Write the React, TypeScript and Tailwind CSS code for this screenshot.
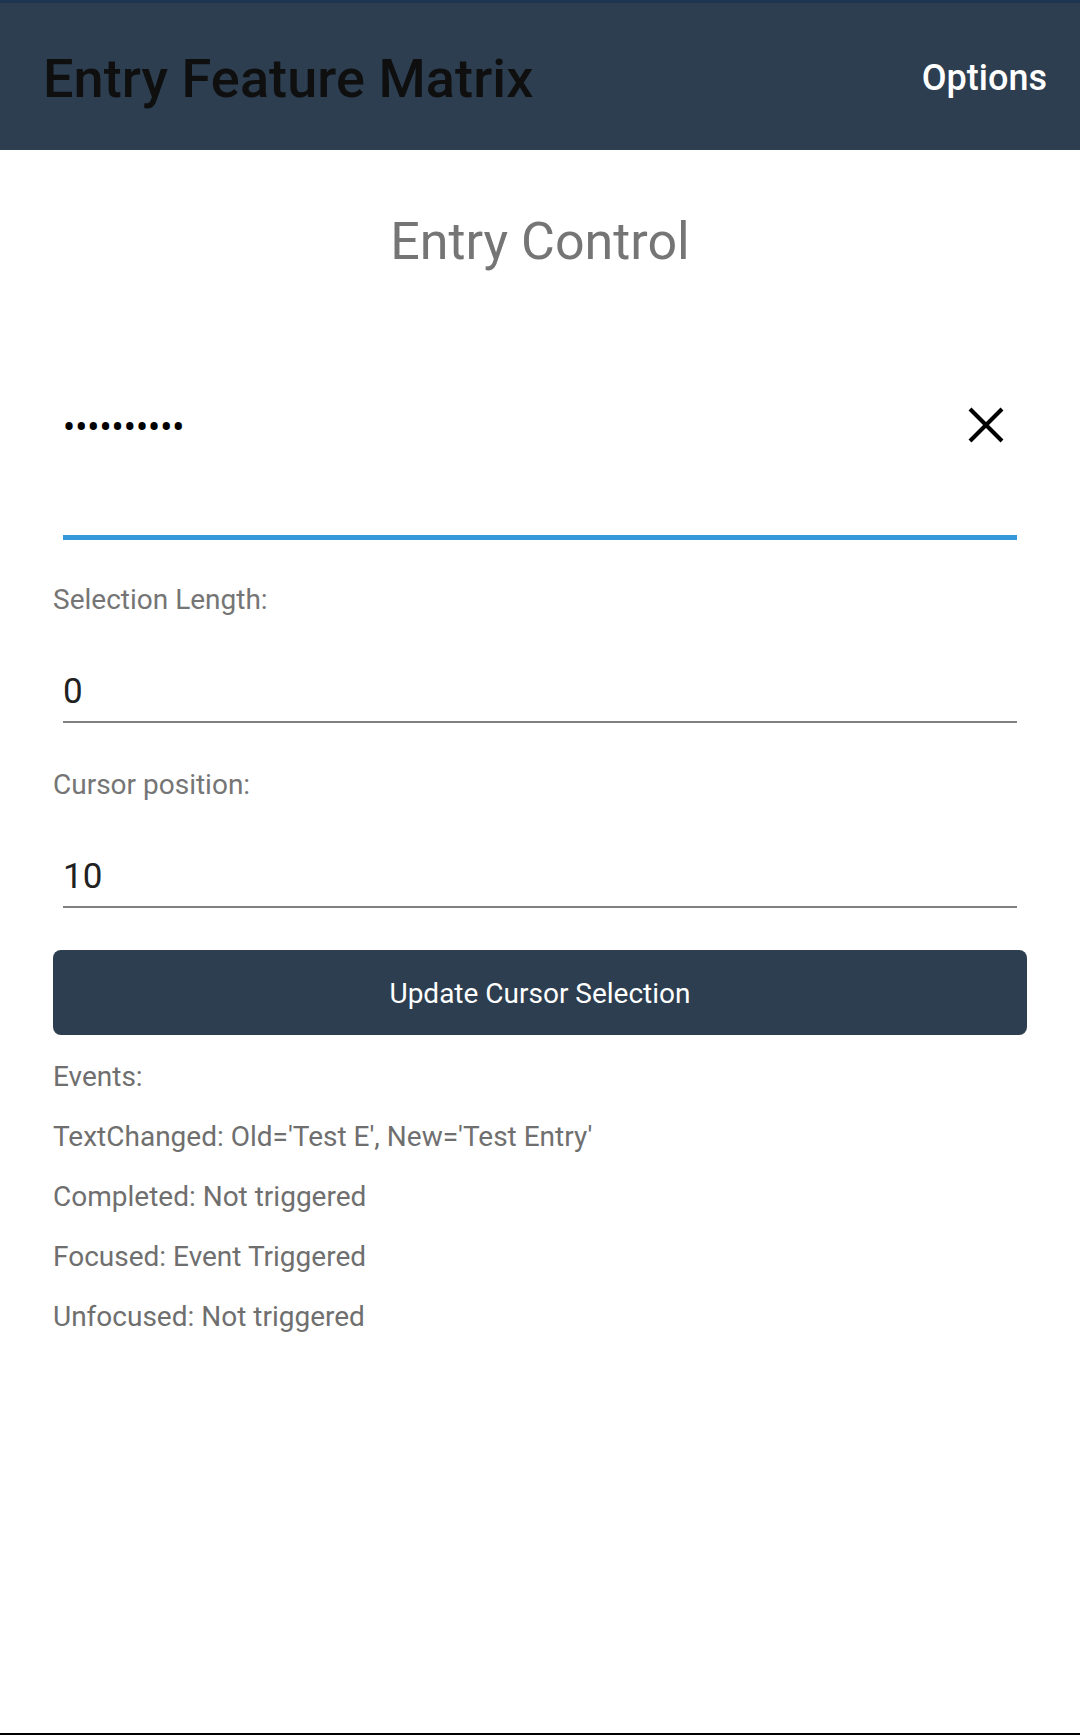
import React from "react";

export default function App() {
  const font = { fontFamily: "Roboto, 'Noto Sans', sans-serif" };
  return (
    <div className="w-[1080px] h-[1735px] bg-white flex flex-col border-b-2 border-black" style={font}>
      <div className="h-[3px] bg-[#1f3651]" />
      <div className="h-[147px] bg-[#2c3e50] flex items-center justify-between pl-[43px] pr-[33px]">
        <div className="text-[54px] leading-[64px] font-medium text-[#0f0f0f] pt-[4px] tracking-[0.1px]">Entry Feature Matrix</div>
        <div className="text-[36px] leading-[42px] font-medium text-white pt-[2px]">Options</div>
      </div>
      <div className="flex flex-col px-[53px]">
        <div className="mt-[61px] text-center text-[52px] leading-[61px] text-[#757575]">Entry Control</div>
        <div className="mt-[113px] mx-[10px] border-b-[5px] border-[#3498db] pb-[70px]">
          <div className="h-[80px] flex items-center justify-between pl-0 pr-[13px]">
            <span className="text-[36px] text-black pt-[5px]">••••••••••</span>
            <svg width="36" height="36" viewBox="0 0 36 36" fill="none" stroke="black" strokeWidth="4">
              <line x1="2" y1="2" x2="34" y2="34" />
              <line x1="34" y1="2" x2="2" y2="34" />
            </svg>
          </div>
        </div>
        <div className="mt-[43px] text-[28px] leading-[34px] text-[#757575]">Selection Length:</div>
        <div className="mt-[54px] mx-[10px] border-b-2 border-[#808080] pb-[9px]">
          <div className="text-[35px] leading-[41px] text-[#212121]">0</div>
        </div>
        <div className="mt-[45px] text-[28px] leading-[34px] text-[#757575]">Cursor position:</div>
        <div className="mt-[54px] mx-[10px] border-b-2 border-[#808080] pb-[9px]">
          <div className="text-[35px] leading-[41px] text-[#212121]">10</div>
        </div>
        <button className="mt-[42px] h-[85px] w-full rounded-[8px] bg-[#2c3e50] text-white text-[28px] flex items-center justify-center pt-[2px]">
          Update Cursor Selection
        </button>
        <div className="mt-[25px] flex flex-col gap-[26px] text-[28px] leading-[34px] text-[#6f6f6f]">
          <div>Events:</div>
          <div>TextChanged: Old='Test E', New='Test Entry'</div>
          <div>Completed: Not triggered</div>
          <div>Focused: Event Triggered</div>
          <div>Unfocused: Not triggered</div>
        </div>
      </div>
    </div>
  );
}
